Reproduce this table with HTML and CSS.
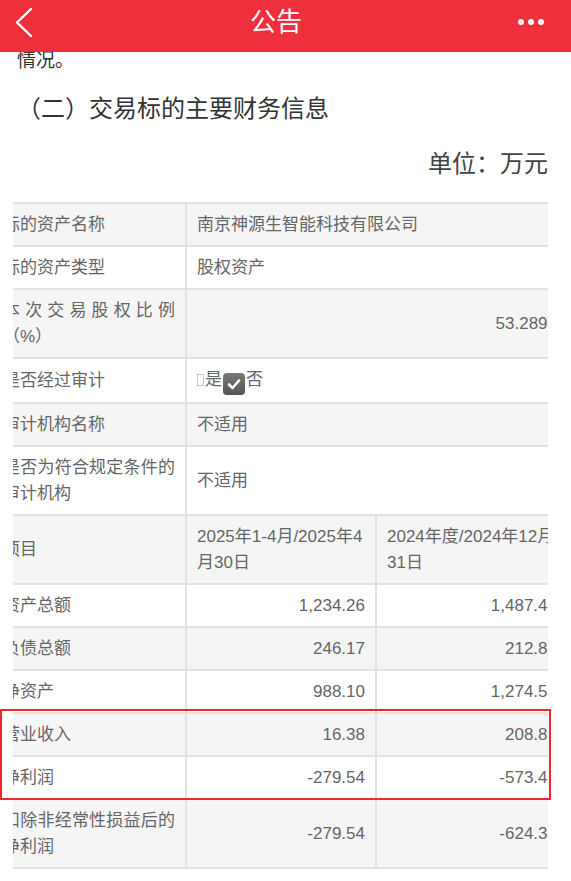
FILE: index.html
```html
<!DOCTYPE html>
<html lang="zh-CN">
<head>
  <meta charset="UTF-8" />
  <meta name="viewport" content="width=device-width, initial-scale=1.0"/>
  <title>公告</title>
  <link rel="stylesheet" href="styles.css">
</head>
<body>
  <header class="topbar">
    <button class="back" aria-label="返回">
      <svg width="20" height="32" viewBox="0 0 20 32">
        <polyline points="17,3 3,16.5 17,30" fill="none" stroke="#fff" stroke-width="2.4" stroke-linecap="round" stroke-linejoin="round"/>
      </svg>
    </button>
    <h1>公告</h1>
    <button class="more" aria-label="更多">
      <span></span><span></span><span></span>
    </button>
  </header>

  <main class="article">
    <p class="tail">情况。</p>
    <h2>（二）交易标的主要财务信息</h2>
    <p class="unit">单位：万元</p>

    <div class="table-area">
      <div class="table-wrap">
        <table class="fin">
          <colgroup>
            <col class="c1"><col class="c2"><col class="c3">
          </colgroup>
          <tr>
            <td class="name">标的资产名称</td>
            <td colspan="2">南京神源生智能科技有限公司</td>
          </tr>
          <tr>
            <td class="name">标的资产类型</td>
            <td colspan="2">股权资产</td>
          </tr>
          <tr>
            <td class="name">本次交易股权比例（%）</td>
            <td colspan="2" class="num">53.2897</td>
          </tr>
          <tr>
            <td class="name">是否经过审计</td>
            <td colspan="2"><span class="box"></span>是<span class="checked"><svg width="14" height="12" viewBox="0 0 14 12"><polyline points="2,6.5 5.5,10 12,2.5" fill="none" stroke="#fff" stroke-width="2.6" stroke-linecap="round" stroke-linejoin="round"/></svg></span>否</td>
          </tr>
          <tr>
            <td class="name">审计机构名称</td>
            <td colspan="2">不适用</td>
          </tr>
          <tr>
            <td class="name">是否为符合规定条件的审计机构</td>
            <td colspan="2">不适用</td>
          </tr>
          <tr>
            <td class="name">项目</td>
            <td>2025年1-4月/2025年4月30日</td>
            <td>2024年度/2024年12月31日</td>
          </tr>
          <tr>
            <td class="name">资产总额</td>
            <td class="num">1,234.26</td>
            <td class="num">1,487.44</td>
          </tr>
          <tr>
            <td class="name">负债总额</td>
            <td class="num">246.17</td>
            <td class="num">212.83</td>
          </tr>
          <tr>
            <td class="name">净资产</td>
            <td class="num">988.10</td>
            <td class="num">1,274.56</td>
          </tr>
          <tr>
            <td class="name">营业收入</td>
            <td class="num">16.38</td>
            <td class="num">208.86</td>
          </tr>
          <tr>
            <td class="name">净利润</td>
            <td class="num">-279.54</td>
            <td class="num">-573.49</td>
          </tr>
          <tr>
            <td class="name">扣除非经常性损益后的净利润</td>
            <td class="num">-279.54</td>
            <td class="num">-624.34</td>
          </tr>
        </table>
      </div>
      <div class="highlight"></div>
    </div>
  </main>
</body>
</html>
```

FILE: styles.css
```css
body {
  margin: 0;
  background: #fff;
  font-family: "Liberation Sans", "Noto Sans CJK SC", sans-serif;
  color: #333;
  overflow: hidden;
}

.topbar {
  position: fixed;
  top: 0;
  left: 0;
  right: 0;
  height: 52px;
  background: #ef2f3b;
  display: flex;
  align-items: center;
  justify-content: space-between;
  z-index: 10;
}

.topbar h1 {
  margin: 0;
  font-size: 26px;
  font-weight: normal;
  color: #fff;
  font-family: "Noto Sans CJK SC", sans-serif;
  padding-bottom: 14px;
}

.topbar button {
  background: none;
  border: none;
  padding: 0;
  cursor: pointer;
}

.back {
  margin-left: 14px;
  margin-bottom: 8px;
  display: flex;
}

.more {
  display: flex;
  gap: 4px;
  margin-right: 27px;
  margin-bottom: 8px;
}

.more span {
  width: 6px;
  height: 6px;
  border-radius: 50%;
  background: #fff;
}

.article {
  padding: 0 23px 0 17px;
}

.tail {
  margin: 46px 0 0;
  font-size: 19px;
  line-height: 30px;
  color: #333;
}

h2 {
  margin: 13px 0 0;
  font-size: 24px;
  line-height: 36px;
  font-weight: normal;
  color: #333;
  font-family: "Noto Sans CJK SC", sans-serif;
}

.unit {
  margin: 19px 0 0;
  text-align: right;
  font-size: 24px;
  line-height: 36px;
  color: #444;
  font-family: "Noto Sans CJK SC", sans-serif;
}

.table-area {
  position: relative;
  margin: 22px 0 0 -4px;
}

.table-wrap {
  overflow: hidden;
}

.fin {
  border-collapse: collapse;
  table-layout: fixed;
  width: 576px;
  margin-left: -22px;
  font-size: 17px;
  line-height: 26px;
  color: #666;
}

.fin .c1 {
  width: 194px;
}

.fin .c2 {
  width: 190px;
}

.fin .c3 {
  width: 192px;
}

.fin td {
  border: 2px solid #e2e2e2;
  padding: 7.5px 10px;
  vertical-align: middle;
  text-align: left;
}

.fin tr:nth-child(odd) td {
  background: #f5f5f5;
}

.fin .name {
  text-align: justify;
}

.fin .num {
  text-align: right;
}

.box {
  display: inline-block;
  width: 5px;
  height: 10px;
  border: 1px solid #c8c8c8;
  vertical-align: -1px;
  margin-right: 1px;
}

.checked {
  display: inline-flex;
  align-items: center;
  justify-content: center;
  width: 22px;
  height: 22px;
  border-radius: 4px;
  background: linear-gradient(#7a7a7a, #555);
  vertical-align: -5px;
  margin: 0 1px;
}

.highlight {
  position: absolute;
  top: 507px;
  left: -13px;
  width: 547px;
  height: 87px;
  border: 2px solid #f2262b;
  pointer-events: none;
}
```
